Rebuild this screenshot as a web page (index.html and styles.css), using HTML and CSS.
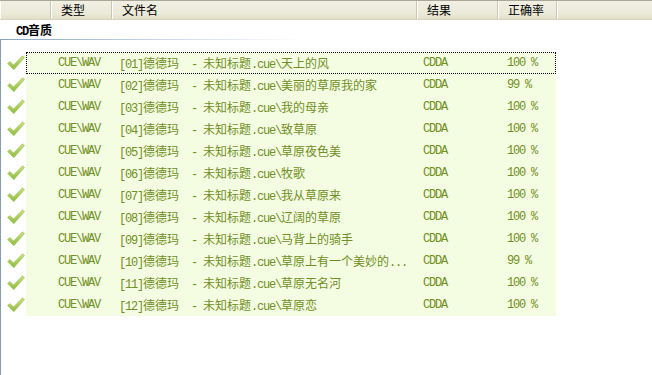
FILE: index.html
```html
<!DOCTYPE html>
<html lang="zh-CN">
<head>
  <meta charset="UTF-8" />
  <title>CD音质</title>
  <link rel="stylesheet" href="styles.css">
</head>
<body>
  <div class="list">
    <div class="head">
      <div class="hcell first"></div>
      <div class="hcell type">类型</div>
      <div class="hcell name">文件名</div>
      <div class="hcell result">结果</div>
      <div class="hcell rate">正确率</div>
      <div class="hcell rest"></div>
    </div>

    <div class="group"><span class="en">CD</span>音质</div>
    <div class="body">
      <div class="group-line"></div>
      <div id="rows" class="rows"></div>
    </div>
  </div>

  <script>
    const tracks = [
      ['01', '天上的风', '100'],
      ['02', '美丽的草原我的家', '99'],
      ['03', '我的母亲', '100'],
      ['04', '致草原', '100'],
      ['05', '草原夜色美', '100'],
      ['06', '牧歌', '100'],
      ['07', '我从草原来', '100'],
      ['08', '辽阔的草原', '100'],
      ['09', '马背上的骑手', '100'],
      ['10', '草原上有一个美妙的<span class="en">...</span>', '99'],
      ['11', '草原无名河', '100'],
      ['12', '草原恋', '100']
    ];

    const check = '<svg width="18" height="16" viewBox="0 0 18 16">' +
      '<defs><linearGradient id="g" x1="0" y1="0" x2="0" y2="1">' +
      '<stop offset="0" stop-color="#c6e281"/><stop offset="1" stop-color="#8fbb3c"/></linearGradient></defs>' +
      '<path d="M0.5 8.5 L3 6.5 L6.5 10 L15.5 0.8 L17.5 2.5 L6.8 14.8 Z" fill="url(#g)" stroke="#9dc152" stroke-width="0.6"/>' +
      '</svg>';

    const rows = document.getElementById('rows');
    tracks.forEach((t, i) => {
      const row = document.createElement('div');
      row.className = 'row';
      row.innerHTML =
        '<div class="ico">' + check + '</div>' +
        '<div class="item' + (i === 0 ? ' focus' : '') + '">' +
          '<div class="cell c-type en">CUE\\WAV</div>' +
          '<div class="cell c-name"><span class="en">[' + t[0] + ']</span>德德玛<span class="en">  - </span>未知标题<span class="en">.cue\\</span>' + t[1] + '</div>' +
          '<div class="cell c-result en">CDDA</div>' +
          '<div class="cell c-rate en">' + t[2] + ' %</div>' +
        '</div>';
      rows.appendChild(row);
    });
  </script>
</body>
</html>
```

FILE: styles.css
```css
* {
  box-sizing: border-box;
}

body {
  margin: 0;
  background: #fff;
  font-family: "Noto Sans CJK SC", sans-serif;
  font-size: 12px;
  color: #000;
}

.list {
  width: 652px;
  height: 375px;
  overflow: hidden;
}

.en {
  font-family: "Liberation Mono", monospace;
  font-size: 12px;
  letter-spacing: -1.2px;
  white-space: pre;
}

/* column header */
.head {
  display: flex;
  height: 20px;
  background: linear-gradient(#f1efe3, #ebe9d8 70%, #e2dfcb);
  border-top: 1px solid #a7a697;
  border-bottom: 1px solid #d6d3c1;
}

.hcell {
  height: 100%;
  line-height: 18px;
  padding-left: 10px;
  border-right: 1px solid #c9c6b3;
  box-shadow: inset 1px 0 0 #fdfdf8;
}

.hcell.first { width: 51px; padding: 0; }
.hcell.type { width: 61px; }
.hcell.name { width: 305px; }
.hcell.result { width: 81px; }
.hcell.rate { width: 59px; }
.hcell.rest { flex: 1; border-right: none; }

/* group title */
.group {
  height: 19px;
  padding: 2px 0 0 16px;
  line-height: 16px;
  font-weight: bold;
}

.group .en {
  font-weight: bold;
}

/* list body */
.body {
  height: 336px;
  border-left: 1px solid #8a9cb4;
}

.group-line {
  height: 1px;
  margin-bottom: 12px;
  background: linear-gradient(to right, #8aa2c4, #c6d3e6 150px, #fff 300px);
}

.row {
  display: flex;
  height: 22px;
}

.ico {
  width: 25px;
  display: flex;
  align-items: center;
  padding-left: 6px;
}

.item {
  display: grid;
  grid-template-columns: 85px 305px 81px 59px;
  align-items: center;
  background: #f4fce2;
  color: #718f22;
}

.item.focus {
  outline: 1px dotted #000;
  outline-offset: -1px;
}

.cell {
  white-space: pre;
  overflow: hidden;
}

.c-type { padding-left: 32px; }
.c-name { padding-left: 8px; }
.c-result { padding-left: 7px; }
.c-rate { padding-left: 10px; }
```
